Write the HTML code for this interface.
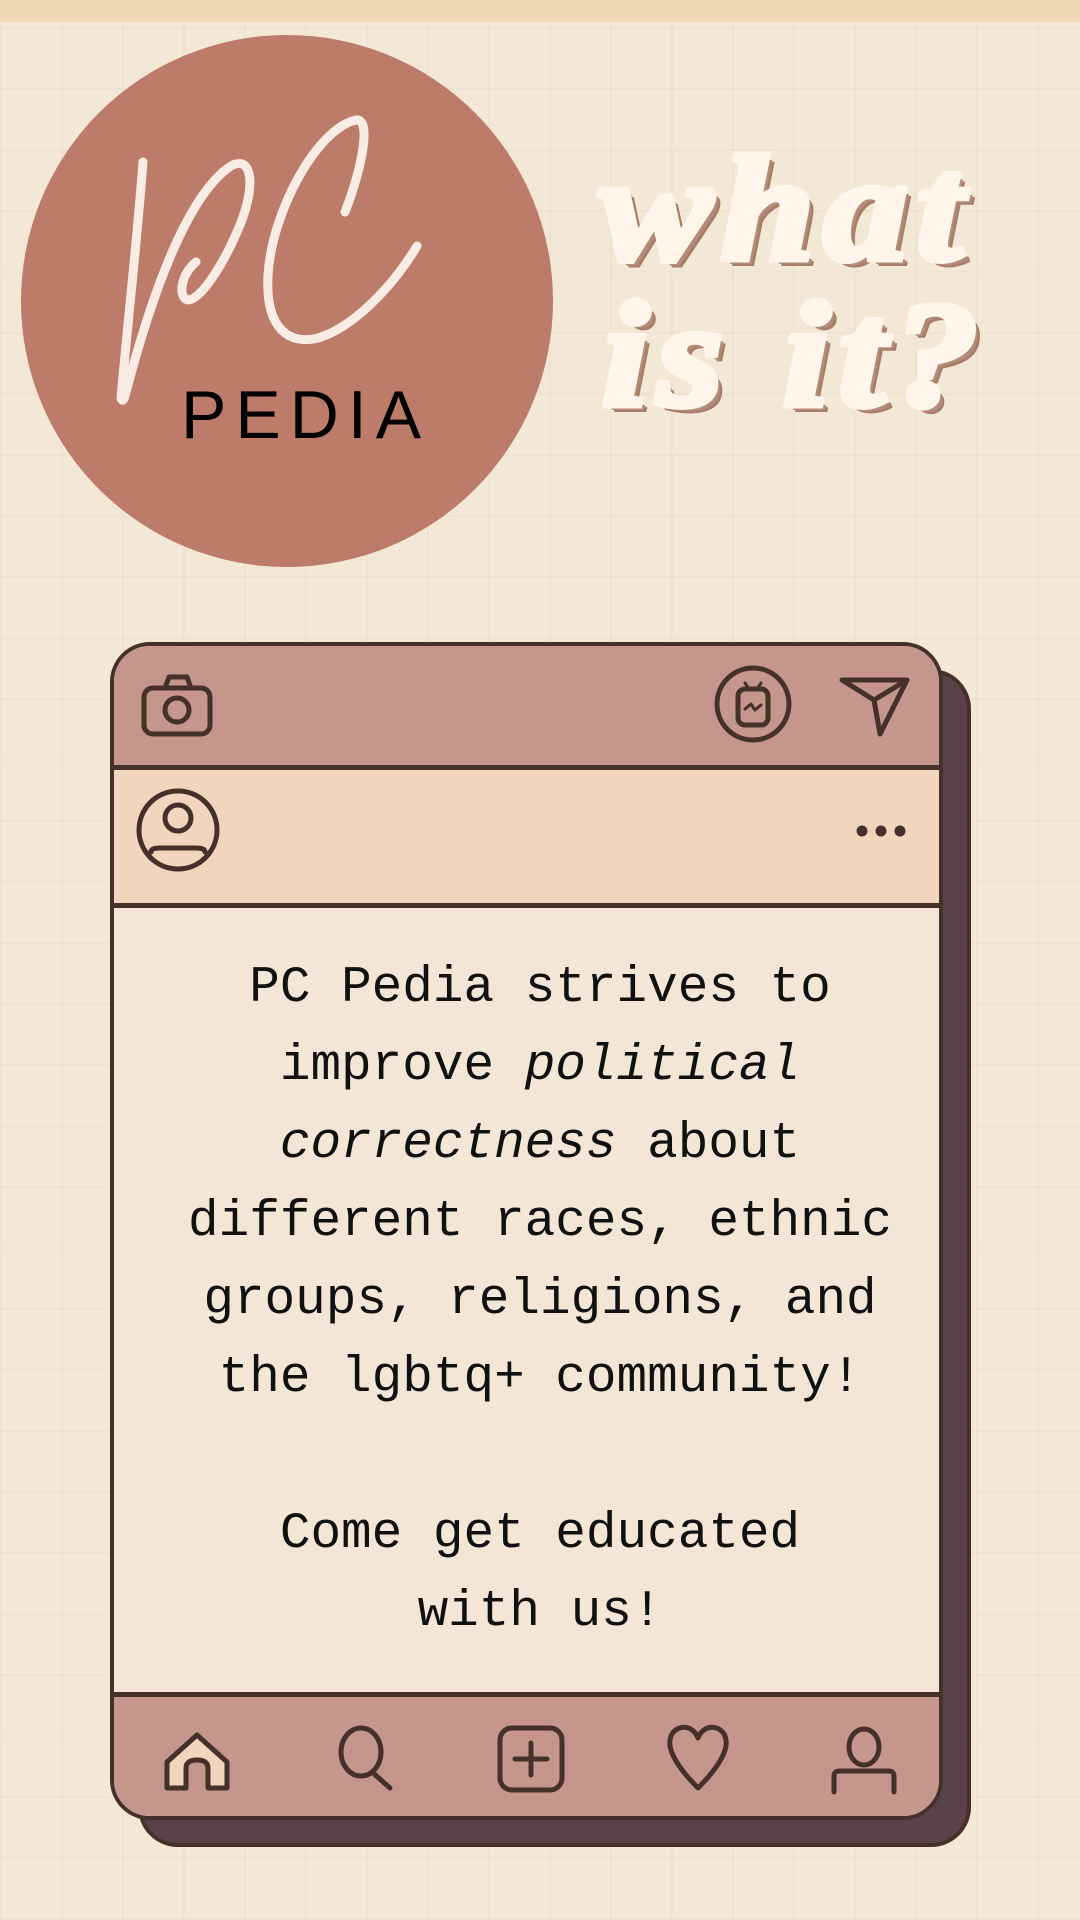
<!DOCTYPE html>
<html><head><meta charset="utf-8"><style>
html,body{margin:0;padding:0}
body{width:1080px;height:1920px;position:relative;overflow:hidden;background:#f3e7d6;
background-image:repeating-linear-gradient(90deg,rgba(120,90,60,.035) 0 2px,transparent 2px 61px),repeating-linear-gradient(0deg,rgba(120,90,60,.035) 0 2px,transparent 2px 61px);}
.top{position:absolute;left:0;top:0;width:1080px;height:22px;background:#efd8b6}
.circle{position:absolute;left:21px;top:35px;width:532px;height:532px;border-radius:50%;background:#bd7b6a}
.pedia{position:absolute;left:181px;top:376px;font:68px "Liberation Sans",sans-serif;letter-spacing:9px;color:#000}
.q{position:absolute;font:italic bold 150px/1 "Liberation Serif",serif;color:#fff5ea;-webkit-text-stroke:7px #fff5ea;text-shadow:5px 5px 0 #b38d78,7px 7px 0 #a77e69;letter-spacing:8px;transform:scaleX(1.12);transform-origin:left top}
.sh{position:absolute;left:138px;top:669px;width:833px;height:1178px;border-radius:40px;background:#5a424b;border:4px solid #46302a;box-sizing:border-box}
.card{position:absolute;left:110px;top:642px;width:833px;height:1178px;border-radius:40px;border:4px solid #46302a;box-sizing:border-box;overflow:hidden;background:#f3e6d6}
.hd{position:absolute;left:0;top:0;width:100%;height:119px;background:#c5968b;border-bottom:5px solid #46302a}
.pr{position:absolute;left:0;top:124px;width:100%;height:133px;background:#f1d5bd;border-bottom:5px solid #46302a}
.ft{position:absolute;left:0;bottom:0;width:100%;height:119px;background:#c5968b;border-top:5px solid #46302a}
.txt{position:absolute;left:0;top:950px;width:1080px;text-align:center;font:51px/78px "Liberation Mono",monospace;color:#111;white-space:pre}
svg{position:absolute}
</style></head><body>
<div class="top"></div>
<div class="circle"></div>
<svg style="left:0;top:0" width="560" height="560" viewBox="0 0 560 560" fill="none" stroke="#f9ece4" stroke-width="9" stroke-linecap="round" stroke-linejoin="round">
<path d="M143,162 C138,230 128,320 121,398 C122,402 124,400 125,396 C150,300 185,200 228,168 C250,152 258,180 240,225 C222,268 200,300 188,300 C178,298 180,275 196,262"/>
<path d="M345,212 C362,168 372,118 356,120 C318,128 272,210 268,275 C265,330 290,345 318,338 C352,328 392,288 417,246"/>
</svg>
<div class="pedia">PEDIA</div>
<div class="q" style="left:600px;top:134px">what</div>
<div class="q" style="left:602px;top:280px">is it?</div>
<div class="sh"></div>
<div class="card">
<div class="hd"></div><div class="pr"></div><div class="ft"></div>
</div>
<svg style="left:0;top:0" width="1080" height="1920" fill="none" stroke="#46302a" stroke-width="5" stroke-linecap="round" stroke-linejoin="round">
<rect x="144" y="688" width="66" height="46" rx="9"/>
<path d="M165,688 L169,677 L187,677 L191,688"/>
<circle cx="177" cy="710" r="12"/>
<circle cx="753" cy="704" r="36"/>
<rect x="738" y="689" width="30" height="36" rx="7"/>
<path d="M745,683 L749,689 M761,683 L757,689 M745,709 L751,704 L755,710 L761,705" stroke-width="3"/>
<path d="M842,680 L907,680 L880,734 L874,700 Z M874,700 L907,680"/>
<circle cx="178" cy="830" r="39"/>
<circle cx="178" cy="818" r="13"/>
<path d="M151,852 Q151,848 160,848 L196,848 Q205,848 205,852"/>
<circle cx="862" cy="831" r="3" fill="#46302a"/><circle cx="881" cy="831" r="3" fill="#46302a"/><circle cx="900" cy="831" r="3" fill="#46302a"/>
<path d="M167,1788 L167,1762 L197,1735 L227,1762 L227,1788 L208,1788 L208,1768 Q208,1760 197,1760 Q186,1760 186,1768 L186,1788 Z" fill="#f1d5bd"/>
<ellipse cx="361" cy="1752" rx="20" ry="24"/>
<path d="M372,1772 L390,1788"/>
<rect x="500" y="1728" width="62" height="62" rx="12"/>
<path d="M531,1743 L531,1775 M515,1759 L547,1759"/>
<path d="M698,1788 C680,1770 668,1752 670,1740 C672,1725 692,1722 698,1738 C704,1722 724,1725 726,1740 C728,1752 716,1770 698,1788 Z"/>
<ellipse cx="864" cy="1747" rx="15" ry="18"/>
<path d="M834,1792 L834,1776 Q834,1771 840,1771 L888,1771 Q894,1771 894,1776 L894,1792"/>
</svg>
<div class="txt">PC Pedia strives to
improve <i>political</i>
<i>correctness</i> about
different races, ethnic
groups, religions, and
the lgbtq+ community!

Come get educated
with us!</div>
</body></html>
